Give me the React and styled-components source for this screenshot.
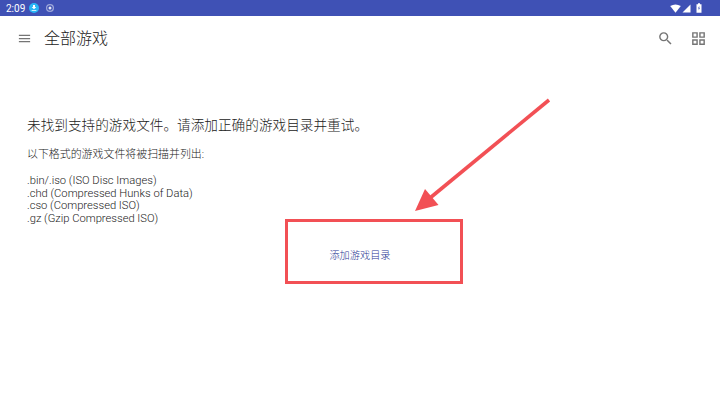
import React from 'react';
import styled, { createGlobalStyle } from 'styled-components';
import { MdMenu, MdSearch, MdOutlineGridView, MdFileDownload } from 'react-icons/md';

const GlobalStyle = createGlobalStyle`
  html, body {
    margin: 0;
    padding: 0;
    background: #fff;
  }
  body {
    font-family: Roboto, "Noto Sans CJK SC", sans-serif;
  }
`;

const Page = styled.div`
  position: relative;
  width: 720px;
  height: 405px;
  overflow: hidden;
  background: #fff;
`;

const StatusBar = styled.div`
  height: 16px;
  background: #3f51b5;
  display: flex;
  align-items: center;
  justify-content: space-between;
  padding: 0 18px 0 6px;
  color: #fff;
  font-size: 10px;
`;

const StatusLeft = styled.div`
  display: flex;
  align-items: center;
  gap: 4px;
`;

const StatusRight = styled.div`
  display: flex;
  align-items: center;
  gap: 1px;
`;

const Badge = styled.span`
  width: 10px;
  height: 10px;
  border-radius: 50%;
  background: #29b6f6;
  display: flex;
  align-items: center;
  justify-content: center;
`;

const Toolbar = styled.div`
  height: 44px;
  display: flex;
  align-items: center;
  padding: 0 13px 0 17px;
  color: #757575;
`;

const Title = styled.div`
  margin-left: 12px;
  margin-top: -2px;
  flex: 1;
  font-size: 16px;
  font-weight: 300;
  color: #212121;
`;

const Actions = styled.div`
  display: flex;
  align-items: center;
  gap: 16px;
`;

const Content = styled.div`
  padding: 56px 27px 0;
  color: #212121;
`;

const Heading = styled.div`
  font-size: 13.65px;
  line-height: 18px;
  font-weight: 300;
  white-space: nowrap;
`;

const Hint = styled.div`
  margin-top: 14px;
  font-size: 10.93px;
  line-height: 13px;
  font-weight: 300;
  color: #212121;
`;

const Formats = styled.div`
  margin-top: 14px;
  font-size: 11.2px;
  line-height: 12.6px;
  font-weight: 300;
  color: #212121;
`;

const ButtonRow = styled.div`
  display: flex;
  justify-content: center;
  margin-top: 24px;
`;

const AddButton = styled.div`
  font-size: 10.2px;
  line-height: 13px;
  font-weight: 300;
  color: #283593;
`;

// the red marks drawn over the screenshot
const Highlight = styled.div`
  position: absolute;
  left: 285px;
  top: 219px;
  width: 178px;
  height: 65px;
  box-sizing: border-box;
  border: 3px solid #f25055;
`;

const Arrow = styled.svg`
  position: absolute;
  left: 0;
  top: 0;
  pointer-events: none;
`;

const App = () => (
  <Page>
    <GlobalStyle />
    <StatusBar>
      <StatusLeft>
        <span>2:09</span>
        <Badge>
          <MdFileDownload size={8} color="#fff" />
        </Badge>
        <svg width="10" height="10" viewBox="0 0 10 10" style={{ marginLeft: 2 }}>
          <circle cx="5" cy="5" r="3.4" fill="none" stroke="#9fa8da" strokeWidth="1.2" />
          <circle cx="5" cy="5" r="1.5" fill="#e8eaf6" />
        </svg>
      </StatusLeft>
      <StatusRight>
        <svg width="11" height="9" viewBox="0 0 11 9">
          <path d="M0.2 2 Q5.5 -1.2 10.8 2 L5.5 8.8 Z" fill="#fff" />
        </svg>
        <svg width="9" height="9" viewBox="0 0 9 9">
          <path d="M0.5 8.5 L8.5 0.5 V8.5 Z" fill="#fff" />
        </svg>
        <svg width="6" height="10" viewBox="0 0 6 10" style={{ marginLeft: 4 }}>
          <path d="M0.5 1.2 H2 V0.2 H4 V1.2 H5.5 V9.8 H0.5 Z" fill="#fff" />
          <path d="M3.3 2.8 L2 5.6 H2.9 L2.6 7.6 L4 4.8 H3.1 Z" fill="#3f51b5" />
        </svg>
      </StatusRight>
    </StatusBar>
    <Toolbar>
      <MdMenu size={15} />
      <Title>全部游戏</Title>
      <Actions>
        <MdSearch size={17} />
        <MdOutlineGridView size={17} />
      </Actions>
    </Toolbar>
    <Content>
      <Heading>未找到支持的游戏文件。请添加正确的游戏目录并重试。</Heading>
      <Hint>以下格式的游戏文件将被扫描并列出:</Hint>
      <Formats>
        <div>.bin/.iso (ISO Disc Images)</div>
        <div>.chd (Compressed Hunks of Data)</div>
        <div>.cso (Compressed ISO)</div>
        <div>.gz (Gzip Compressed ISO)</div>
      </Formats>
      <ButtonRow>
        <AddButton>添加游戏目录</AddButton>
      </ButtonRow>
    </Content>
    <Highlight />
    <Arrow width="720" height="405" viewBox="0 0 720 405">
      <line x1="549" y1="100" x2="430" y2="198" stroke="#f25055" strokeWidth="3.6" />
      <polygon points="415,211 425,189 438.5,205" fill="#f25055" />
    </Arrow>
  </Page>
);

export default App;
